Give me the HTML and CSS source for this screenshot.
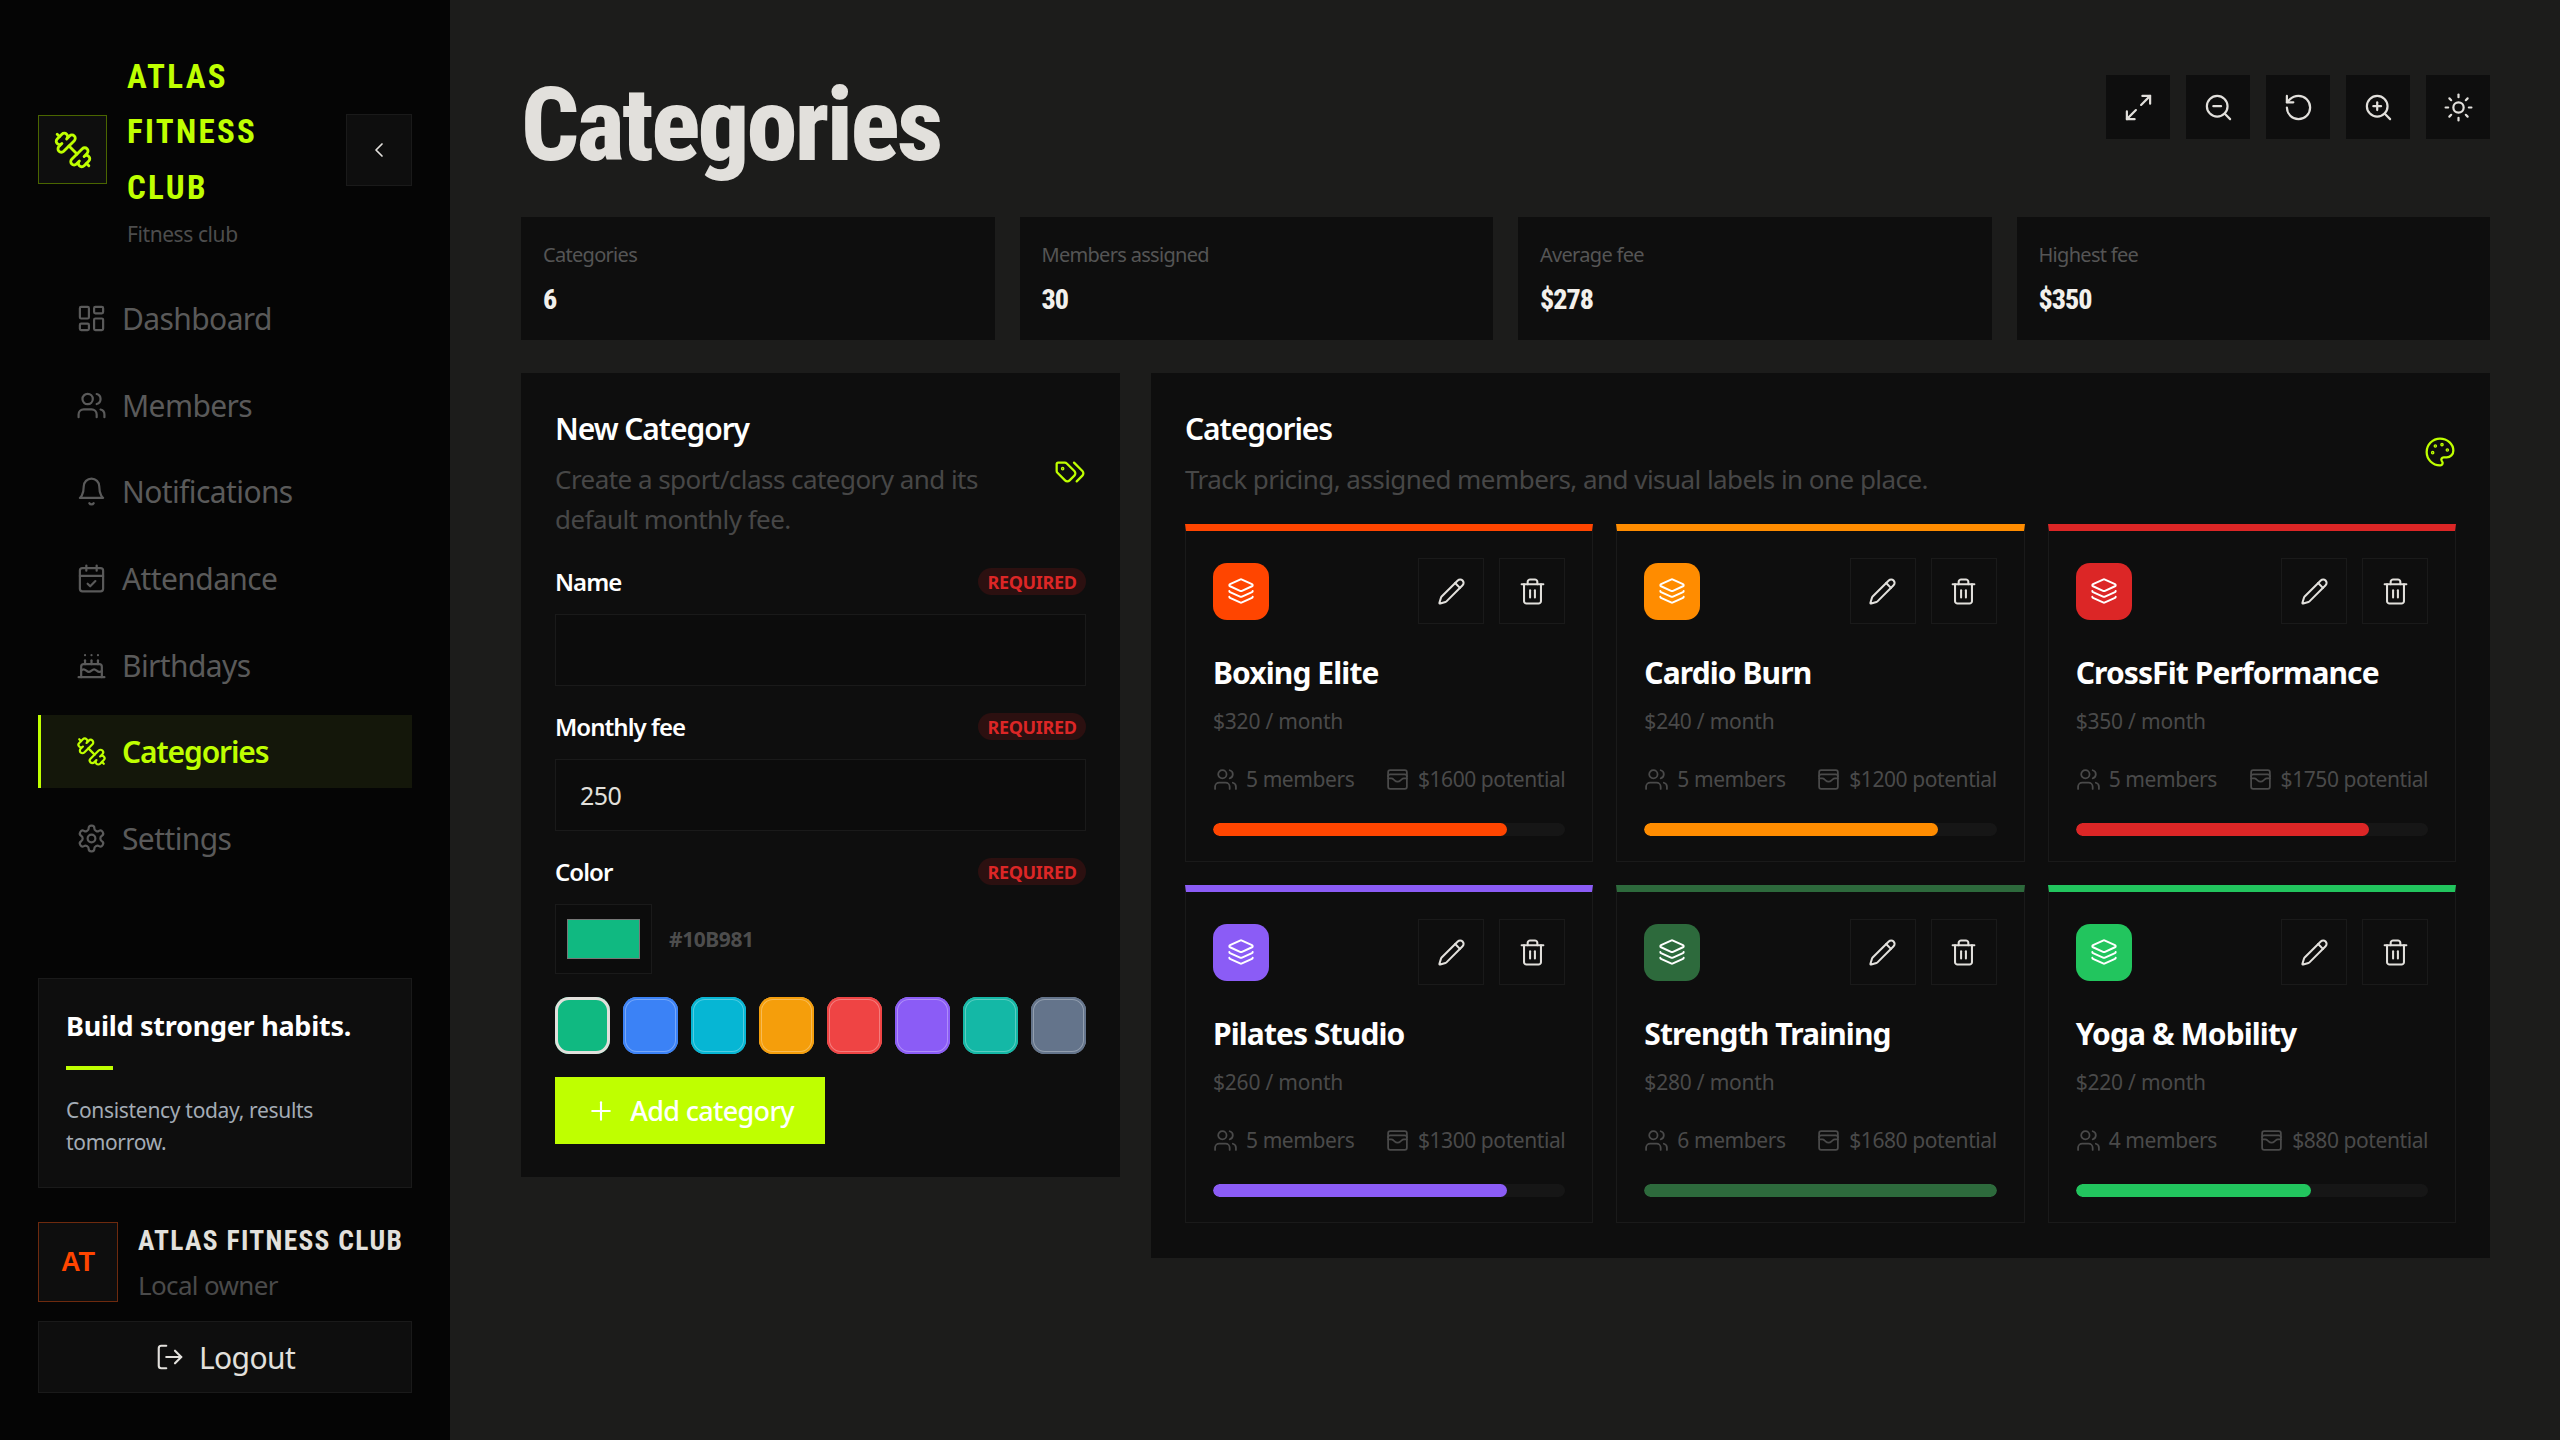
FILE: index.html
```html
<!DOCTYPE html>
<html lang="en">
<head>
<meta charset="UTF-8" />
<title>Categories - Atlas Fitness Club</title>
<link rel="stylesheet" href="styles.css">
</head>
<body>

<svg class="sprite" xmlns="http://www.w3.org/2000/svg">
    <symbol id="i-dumbbell" viewBox="0 0 24 24"><g transform="matrix(-1 0 0 1 24 0)"><path d="M17.596 12.768a2 2 0 1 0 2.829-2.829l-1.768-1.767a2 2 0 0 0 2.828-2.829l-2.828-2.828a2 2 0 0 0-2.829 2.828l-1.767-1.768a2 2 0 1 0-2.829 2.829z"/><path d="m2.5 21.5 1.4-1.4"/><path d="m20.1 3.9 1.4-1.4"/><path d="M5.343 21.485a2 2 0 1 0 2.829-2.828l1.767 1.768a2 2 0 1 0 2.829-2.829l-6.364-6.364a2 2 0 1 0-2.829 2.829l1.768 1.767a2 2 0 0 0-2.828 2.829z"/><path d="m9.6 14.4 4.8-4.8"/></g></symbol>
    <symbol id="i-chevron" viewBox="0 0 24 24"><path d="m15 18-6-6 6-6"/></symbol>
    <symbol id="i-dashboard" viewBox="0 0 24 24"><rect x="3" y="3" width="7" height="9" rx="1"/><rect x="14" y="3" width="7" height="5" rx="1"/><rect x="14" y="12" width="7" height="9" rx="1"/><rect x="3" y="16" width="7" height="5" rx="1"/></symbol>
    <symbol id="i-users" viewBox="0 0 24 24"><path d="M16 21v-2a4 4 0 0 0-4-4H6a4 4 0 0 0-4 4v2"/><circle cx="9" cy="7" r="4"/><path d="M22 21v-2a4 4 0 0 0-3-3.87"/><path d="M16 3.13a4 4 0 0 1 0 7.75"/></symbol>
    <symbol id="i-bell" viewBox="0 0 24 24"><path d="M6 8a6 6 0 0 1 12 0c0 7 3 9 3 9H3s3-2 3-9"/><path d="M10.3 21a1.94 1.94 0 0 0 3.4 0"/></symbol>
    <symbol id="i-calendar" viewBox="0 0 24 24"><path d="M8 2v4"/><path d="M16 2v4"/><rect x="3" y="4" width="18" height="18" rx="2"/><path d="M3 10h18"/><path d="m9 16 2 2 4-4"/></symbol>
    <symbol id="i-cake" viewBox="0 0 24 24"><path d="M20 21v-8a2 2 0 0 0-2-2H6a2 2 0 0 0-2 2v8"/><path d="M4 16s.5-1 2-1 2.5 2 4 2 2.5-2 4-2 2.5 2 4 2 2-1 2-1"/><path d="M2 21h20"/><path d="M7 8v3"/><path d="M12 8v3"/><path d="M17 8v3"/><path d="M7 4h.01"/><path d="M12 4h.01"/><path d="M17 4h.01"/></symbol>
    <symbol id="i-settings" viewBox="0 0 24 24"><path d="M12.22 2h-.44a2 2 0 0 0-2 2v.18a2 2 0 0 1-1 1.73l-.43.25a2 2 0 0 1-2 0l-.15-.08a2 2 0 0 0-2.73.73l-.22.38a2 2 0 0 0 .73 2.73l.15.1a2 2 0 0 1 1 1.72v.51a2 2 0 0 1-1 1.74l-.15.09a2 2 0 0 0-.73 2.73l.22.38a2 2 0 0 0 2.73.73l.15-.08a2 2 0 0 1 2 0l.43.25a2 2 0 0 1 1 1.73V20a2 2 0 0 0 2 2h.44a2 2 0 0 0 2-2v-.18a2 2 0 0 1 1-1.73l.43-.25a2 2 0 0 1 2 0l.15.08a2 2 0 0 0 2.73-.73l.22-.39a2 2 0 0 0-.73-2.73l-.15-.08a2 2 0 0 1-1-1.74v-.5a2 2 0 0 1 1-1.74l.15-.09a2 2 0 0 0 .73-2.73l-.22-.38a2 2 0 0 0-2.73-.73l-.15.08a2 2 0 0 1-2 0l-.43-.25a2 2 0 0 1-1-1.73V4a2 2 0 0 0-2-2z"/><circle cx="12" cy="12" r="3"/></symbol>
    <symbol id="i-logout" viewBox="0 0 24 24"><path d="M9 21H5a2 2 0 0 1-2-2V5a2 2 0 0 1 2-2h4"/><path d="m16 17 5-5-5-5"/><path d="M21 12H9"/></symbol>
    <symbol id="i-expand" viewBox="0 0 24 24"><path d="M15 3h6v6"/><path d="m21 3-7 7"/><path d="m3 21 7-7"/><path d="M9 21H3v-6"/></symbol>
    <symbol id="i-zoom-out" viewBox="0 0 24 24"><circle cx="11" cy="11" r="8"/><path d="m21 21-4.3-4.3"/><path d="M8 11h6"/></symbol>
    <symbol id="i-zoom-in" viewBox="0 0 24 24"><circle cx="11" cy="11" r="8"/><path d="m21 21-4.3-4.3"/><path d="M8 11h6"/><path d="M11 8v6"/></symbol>
    <symbol id="i-rotate" viewBox="0 0 24 24"><path d="M3 12a9 9 0 1 0 9-9 9.75 9.75 0 0 0-6.74 2.74L3 8"/><path d="M3 3v5h5"/></symbol>
    <symbol id="i-sun" viewBox="0 0 24 24"><circle cx="12" cy="12" r="4"/><path d="M12 2v2"/><path d="M12 20v2"/><path d="m4.93 4.93 1.41 1.41"/><path d="m17.66 17.66 1.41 1.41"/><path d="M2 12h2"/><path d="M20 12h2"/><path d="m6.34 17.66-1.41 1.41"/><path d="m19.07 4.93-1.41 1.41"/></symbol>
    <symbol id="i-tags" viewBox="0 0 24 24"><path d="m15 5 6.3 6.3a2.4 2.4 0 0 1 0 3.4L17 19"/><path d="M9.586 5.586A2 2 0 0 0 8.172 5H3a1 1 0 0 0-1 1v5.172a2 2 0 0 0 .586 1.414L8.29 18.29a2.426 2.426 0 0 0 3.42 0l3.58-3.58a2.426 2.426 0 0 0 0-3.42z"/><circle cx="6.5" cy="9.5" r=".5"/></symbol>
    <symbol id="i-palette" viewBox="0 0 24 24"><path d="M12 22a1 1 0 0 1 0-20 10 9 0 0 1 10 9 5 5 0 0 1-5 5h-2.25a1.75 1.75 0 0 0-1.4 2.8l.3.4a1.75 1.75 0 0 1-1.4 2.8z"/><circle cx="13.5" cy="6.5" r=".5"/><circle cx="17.5" cy="10.5" r=".5"/><circle cx="6.5" cy="12.5" r=".5"/><circle cx="8.5" cy="7.5" r=".5"/></symbol>
    <symbol id="i-plus" viewBox="0 0 24 24"><path d="M5 12h14"/><path d="M12 5v14"/></symbol>
    <symbol id="i-layers" viewBox="0 0 24 24"><path d="M12.83 2.18a2 2 0 0 0-1.66 0L2.6 6.08a1 1 0 0 0 0 1.83l8.58 3.91a2 2 0 0 0 1.66 0l8.58-3.9a1 1 0 0 0 0-1.83z"/><path d="M2 12a1 1 0 0 0 .58.91l8.6 3.91a2 2 0 0 0 1.65 0l8.58-3.9A1 1 0 0 0 22 12"/><path d="M2 17a1 1 0 0 0 .58.91l8.6 3.91a2 2 0 0 0 1.65 0l8.58-3.9A1 1 0 0 0 22 17"/></symbol>
    <symbol id="i-pencil" viewBox="0 0 24 24"><path d="M21.174 6.812a1 1 0 0 0-3.986-3.987L3.842 16.174a2 2 0 0 0-.5.83l-1.321 4.352a.5.5 0 0 0 .623.622l4.353-1.32a2 2 0 0 0 .83-.497z"/><path d="m15 5 4 4"/></symbol>
    <symbol id="i-trash" viewBox="0 0 24 24"><path d="M3 6h18"/><path d="M19 6v14c0 1-1 2-2 2H7c-1 0-2-1-2-2V6"/><path d="M8 6V4c0-1 1-2 2-2h4c1 0 2 1 2 2v2"/><path d="M10 11v6"/><path d="M14 11v6"/></symbol>
    <symbol id="i-wallet" viewBox="0 0 24 24"><rect x="3" y="3" width="18" height="18" rx="2"/><path d="M3 9a2 2 0 0 1 2-2h14a2 2 0 0 1 2 2"/><path d="M3 11h3c.8 0 1.6.3 2.1.9l1.1.9c1.6 1.6 4.1 1.6 5.7 0l1.1-.9c.5-.5 1.3-.9 2.1-.9H21"/></symbol>
</svg>

<div class="app">
    <aside class="sidebar">
        <div class="brand">
            <div class="brand-logo"><svg class="icon"><use href="#i-dumbbell"/></svg></div>
            <div class="brand-text">
                <div class="brand-name">ATLAS FITNESS CLUB</div>
                <div class="brand-sub">Fitness club</div>
            </div>
            <button class="collapse-btn"><svg class="icon"><use href="#i-chevron"/></svg></button>
        </div>

        <nav class="nav">
            <a class="nav-item"><svg class="icon"><use href="#i-dashboard"/></svg>Dashboard</a>
            <a class="nav-item"><svg class="icon"><use href="#i-users"/></svg>Members</a>
            <a class="nav-item"><svg class="icon"><use href="#i-bell"/></svg>Notifications</a>
            <a class="nav-item"><svg class="icon"><use href="#i-calendar"/></svg>Attendance</a>
            <a class="nav-item"><svg class="icon"><use href="#i-cake"/></svg>Birthdays</a>
            <a class="nav-item active"><svg class="icon"><use href="#i-dumbbell"/></svg>Categories</a>
            <a class="nav-item"><svg class="icon"><use href="#i-settings"/></svg>Settings</a>
        </nav>

        <div class="promo">
            <div class="promo-title">Build stronger habits.</div>
            <div class="promo-line"></div>
            <p class="promo-text">Consistency today, results tomorrow.</p>
        </div>

        <div class="owner">
            <div class="avatar">AT</div>
            <div>
                <div class="owner-name">ATLAS FITNESS CLUB</div>
                <div class="owner-role">Local owner</div>
            </div>
        </div>

        <button class="logout"><svg class="icon"><use href="#i-logout"/></svg>Logout</button>
    </aside>

    <main class="main">
        <header class="page-head">
            <h1>Categories</h1>
            <div class="tools">
                <button class="tool"><svg class="icon"><use href="#i-expand"/></svg></button>
                <button class="tool"><svg class="icon"><use href="#i-zoom-out"/></svg></button>
                <button class="tool"><svg class="icon"><use href="#i-rotate"/></svg></button>
                <button class="tool"><svg class="icon"><use href="#i-zoom-in"/></svg></button>
                <button class="tool"><svg class="icon"><use href="#i-sun"/></svg></button>
            </div>
        </header>

        <section class="stats">
            <div class="stat"><div class="stat-label">Categories</div><div class="stat-value">6</div></div>
            <div class="stat"><div class="stat-label">Members assigned</div><div class="stat-value">30</div></div>
            <div class="stat"><div class="stat-label">Average fee</div><div class="stat-value">$278</div></div>
            <div class="stat"><div class="stat-label">Highest fee</div><div class="stat-value">$350</div></div>
        </section>

        <section class="columns">
            <form class="panel form-panel">
                <div class="panel-head">
                    <div>
                        <h2>New Category</h2>
                        <p>Create a sport/class category and its default monthly fee.</p>
                    </div>
                    <svg class="icon panel-icon"><use href="#i-tags"/></svg>
                </div>

                <div class="field-label first"><label>Name</label><span class="badge">REQUIRED</span></div>
                <input class="input" type="text" />

                <div class="field-label"><label>Monthly fee</label><span class="badge">REQUIRED</span></div>
                <input class="input" type="text" value="250" />

                <div class="field-label"><label>Color</label><span class="badge">REQUIRED</span></div>
                <div class="color-row">
                    <div class="color-box"><div class="color-fill"></div></div>
                    <span class="color-hex">#10B981</span>
                </div>
                <div class="swatches">
                    <span class="swatch selected s-emerald"></span>
                    <span class="swatch s-blue"></span>
                    <span class="swatch s-cyan"></span>
                    <span class="swatch s-amber"></span>
                    <span class="swatch s-red"></span>
                    <span class="swatch s-violet"></span>
                    <span class="swatch s-teal"></span>
                    <span class="swatch s-slate"></span>
                </div>
                <button class="add-btn" type="button"><svg class="icon"><use href="#i-plus"/></svg>Add category</button>
            </form>

            <div class="panel list-panel">
                <div class="panel-head">
                    <div>
                        <h2>Categories</h2>
                        <p>Track pricing, assigned members, and visual labels in one place.</p>
                    </div>
                    <svg class="icon panel-icon"><use href="#i-palette"/></svg>
                </div>

                <div class="cards">
                    <article class="card c-orange">
                        <div class="card-top">
                            <div class="card-icon"><svg class="icon"><use href="#i-layers"/></svg></div>
                            <div class="card-actions">
                                <button class="act"><svg class="icon"><use href="#i-pencil"/></svg></button>
                                <button class="act"><svg class="icon"><use href="#i-trash"/></svg></button>
                            </div>
                        </div>
                        <h3>Boxing Elite</h3>
                        <div class="price">$320 / month</div>
                        <div class="meta">
                            <span><svg class="icon"><use href="#i-users"/></svg>5 members</span>
                            <span><svg class="icon"><use href="#i-wallet"/></svg>$1600 potential</span>
                        </div>
                        <div class="bar"><div class="bar-fill" style="width: 83.33%"></div></div>
                    </article>

                    <article class="card c-amber">
                        <div class="card-top">
                            <div class="card-icon"><svg class="icon"><use href="#i-layers"/></svg></div>
                            <div class="card-actions">
                                <button class="act"><svg class="icon"><use href="#i-pencil"/></svg></button>
                                <button class="act"><svg class="icon"><use href="#i-trash"/></svg></button>
                            </div>
                        </div>
                        <h3>Cardio Burn</h3>
                        <div class="price">$240 / month</div>
                        <div class="meta">
                            <span><svg class="icon"><use href="#i-users"/></svg>5 members</span>
                            <span><svg class="icon"><use href="#i-wallet"/></svg>$1200 potential</span>
                        </div>
                        <div class="bar"><div class="bar-fill" style="width: 83.33%"></div></div>
                    </article>

                    <article class="card c-red">
                        <div class="card-top">
                            <div class="card-icon"><svg class="icon"><use href="#i-layers"/></svg></div>
                            <div class="card-actions">
                                <button class="act"><svg class="icon"><use href="#i-pencil"/></svg></button>
                                <button class="act"><svg class="icon"><use href="#i-trash"/></svg></button>
                            </div>
                        </div>
                        <h3>CrossFit Performance</h3>
                        <div class="price">$350 / month</div>
                        <div class="meta">
                            <span><svg class="icon"><use href="#i-users"/></svg>5 members</span>
                            <span><svg class="icon"><use href="#i-wallet"/></svg>$1750 potential</span>
                        </div>
                        <div class="bar"><div class="bar-fill" style="width: 83.33%"></div></div>
                    </article>

                    <article class="card c-violet">
                        <div class="card-top">
                            <div class="card-icon"><svg class="icon"><use href="#i-layers"/></svg></div>
                            <div class="card-actions">
                                <button class="act"><svg class="icon"><use href="#i-pencil"/></svg></button>
                                <button class="act"><svg class="icon"><use href="#i-trash"/></svg></button>
                            </div>
                        </div>
                        <h3>Pilates Studio</h3>
                        <div class="price">$260 / month</div>
                        <div class="meta">
                            <span><svg class="icon"><use href="#i-users"/></svg>5 members</span>
                            <span><svg class="icon"><use href="#i-wallet"/></svg>$1300 potential</span>
                        </div>
                        <div class="bar"><div class="bar-fill" style="width: 83.33%"></div></div>
                    </article>

                    <article class="card c-forest">
                        <div class="card-top">
                            <div class="card-icon"><svg class="icon"><use href="#i-layers"/></svg></div>
                            <div class="card-actions">
                                <button class="act"><svg class="icon"><use href="#i-pencil"/></svg></button>
                                <button class="act"><svg class="icon"><use href="#i-trash"/></svg></button>
                            </div>
                        </div>
                        <h3>Strength Training</h3>
                        <div class="price">$280 / month</div>
                        <div class="meta">
                            <span><svg class="icon"><use href="#i-users"/></svg>6 members</span>
                            <span><svg class="icon"><use href="#i-wallet"/></svg>$1680 potential</span>
                        </div>
                        <div class="bar"><div class="bar-fill" style="width: 100%"></div></div>
                    </article>

                    <article class="card c-green">
                        <div class="card-top">
                            <div class="card-icon"><svg class="icon"><use href="#i-layers"/></svg></div>
                            <div class="card-actions">
                                <button class="act"><svg class="icon"><use href="#i-pencil"/></svg></button>
                                <button class="act"><svg class="icon"><use href="#i-trash"/></svg></button>
                            </div>
                        </div>
                        <h3>Yoga &amp; Mobility</h3>
                        <div class="price">$220 / month</div>
                        <div class="meta">
                            <span><svg class="icon"><use href="#i-users"/></svg>4 members</span>
                            <span><svg class="icon"><use href="#i-wallet"/></svg>$880 potential</span>
                        </div>
                        <div class="bar"><div class="bar-fill" style="width: 66.67%"></div></div>
                    </article>
                </div>
            </div>
        </section>
    </main>
</div>

</body>
</html>
```

FILE: styles.css
```css
* {
    box-sizing: border-box;
    letter-spacing: -0.02em;
}

body {
    margin: 0;
    background: #1c1c1b;
    color: #e2e0dc;
    font-family: "Noto Sans", "Open Sans", sans-serif;
}

button {
    font-family: inherit;
    cursor: pointer;
}

.sprite {
    display: none;
}

.icon {
    width: 24px;
    height: 24px;
    flex: none;
    fill: none;
    stroke: currentColor;
    stroke-width: 1.7;
    stroke-linecap: round;
    stroke-linejoin: round;
}

.app {
    display: flex;
    width: 2560px;
    height: 1440px;
    overflow: hidden;
}

/* sidebar */
.sidebar {
    width: 450px;
    flex: none;
    background: #050505;
    padding: 47px 38px;
    display: flex;
    flex-direction: column;
}

.brand {
    display: flex;
    align-items: center;
    height: 205px;
}

.brand-logo {
    width: 69px;
    height: 69px;
    flex: none;
    background: #0e0e0e;
    border: 1px solid #4a6600;
    color: #bfff00;
    display: flex;
    align-items: center;
    justify-content: center;
}

.brand-logo .icon {
    width: 40px;
    height: 40px;
}

.brand-text {
    width: 218px;
    padding: 3px 0 0 20px;
}

.brand-name {
    font-family: "Roboto", "Liberation Sans", sans-serif;
    font-stretch: 75%;
    font-weight: 700;
    font-size: 33px;
    line-height: 55.5px;
    letter-spacing: 2.3px;
    color: #bfff00;
    width: 120px;
}

.brand-sub {
    font-size: 21px;
    line-height: 38px;
    color: #4d4d4d;
}

.collapse-btn {
    width: 66px;
    height: 72px;
    margin-left: auto;
    background: #0e0e0e;
    border: 1px solid #1a1a1a;
    color: #e2e0dc;
    display: flex;
    align-items: center;
    justify-content: center;
    padding: 0;
}

.nav {
    margin-top: 30px;
    display: flex;
    flex-direction: column;
    gap: 13.7px;
}

.nav-item {
    height: 73px;
    display: flex;
    align-items: center;
    gap: 15px;
    padding-left: 35px;
    border-left: 3px solid transparent;
    font-size: 30px;
    color: #5a5a5a;
}

.nav-item .icon {
    width: 31px;
    height: 31px;
}

.nav-item.active {
    background: #14170a;
    border-left-color: #bfff00;
    color: #bfff00;
    font-weight: 600;
    letter-spacing: -0.037em;
}

.promo {
    margin-top: auto;
    height: 210px;
    background: #0e0e0e;
    border: 1px solid #1a1a1a;
    padding: 28px 27px;
}

.promo-title {
    font-size: 27px;
    font-weight: 700;
    line-height: 38px;
    letter-spacing: -0.01em;
    color: #fff;
}

.promo-line {
    width: 47px;
    height: 4px;
    background: #bfff00;
    margin-top: 21px;
}

.promo-text {
    margin: 24px 0 0;
    font-size: 21px;
    line-height: 32px;
    letter-spacing: -0.015em;
    color: #a3abb5;
}

.owner {
    display: flex;
    align-items: flex-start;
    gap: 20px;
    height: 80px;
    margin-top: 34px;
}

.avatar {
    width: 80px;
    height: 80px;
    flex: none;
    background: #0e0e0e;
    border: 1px solid #6e2a0e;
    color: #ff4500;
    font-family: "Liberation Sans", sans-serif;
    font-weight: 700;
    font-size: 27px;
    letter-spacing: 0;
    display: flex;
    align-items: center;
    justify-content: center;
}

.owner-name {
    font-family: "Roboto", "Liberation Sans", sans-serif;
    font-stretch: 75%;
    font-weight: 700;
    font-size: 27.5px;
    letter-spacing: 1.3px;
    line-height: 38px;
    white-space: nowrap;
}

.owner-role {
    margin-top: 4px;
    font-size: 26px;
    line-height: 42px;
    letter-spacing: -0.025em;
    color: #4a4a4a;
}

.logout {
    height: 72px;
    margin-top: 19px;
    background: #0e0e0e;
    border: 1px solid #1a1a1a;
    color: #e2e0dc;
    font-size: 30px;
    display: flex;
    align-items: center;
    justify-content: center;
    gap: 14px;
    padding: 0;
}

.logout .icon {
    width: 30px;
    height: 30px;
}

/* main */
.main {
    flex: 1;
    padding: 75px 70px 0 71px;
    min-width: 0;
}

.page-head {
    display: flex;
    justify-content: space-between;
    align-items: flex-start;
}

h1 {
    margin: 0 0 42px;
    font-family: "Roboto", "Liberation Sans", sans-serif;
    font-stretch: 75%;
    font-weight: 800;
    font-size: 102px;
    letter-spacing: -2.5px;
    line-height: 100px;
}

.tools {
    display: flex;
    gap: 16px;
}

.tool {
    width: 64px;
    height: 64px;
    background: #0e0e0e;
    border: none;
    color: #e2e0dc;
    display: flex;
    align-items: center;
    justify-content: center;
    padding: 0;
}

.tool .icon {
    width: 31px;
    height: 31px;
}

.stats {
    display: grid;
    grid-template-columns: repeat(4, 1fr);
    gap: 25px;
}

.stat {
    height: 123px;
    background: #0e0e0e;
    padding: 23px 22px;
}

.stat-label {
    font-size: 20px;
    line-height: 30px;
    letter-spacing: -0.035em;
    color: #555;
}

.stat-value {
    margin-top: 12px;
    font-family: "Roboto", "Liberation Sans", sans-serif;
    font-stretch: 75%;
    font-weight: 800;
    font-size: 28px;
    letter-spacing: -1px;
    line-height: 36px;
    color: #f2f0ec;
}

.columns {
    display: grid;
    grid-template-columns: 599px 1fr;
    gap: 31px;
    align-items: start;
    margin-top: 33px;
}

.panel {
    background: #0e0e0e;
    padding: 36px 34px 35px;
}

.form-panel {
    padding-bottom: 33px;
}

.panel-head {
    display: flex;
    justify-content: space-between;
    align-items: center;
    gap: 40px;
}

h2 {
    margin: 0;
    font-size: 30px;
    font-weight: 600;
    line-height: 40px;
    letter-spacing: -0.035em;
    color: #fff;
}

.panel-head p {
    margin: 10px 0 0;
    font-size: 26px;
    line-height: 40px;
    letter-spacing: -0.021em;
    color: #474747;
}

.panel-icon {
    width: 32px;
    height: 32px;
    margin-bottom: 5px;
    color: #bfff00;
}

/* form */
.field-label {
    display: flex;
    justify-content: space-between;
    align-items: center;
    height: 27px;
    margin: 27px 0 19px;
}

.field-label.first {
    margin-top: 29px;
}

.field-label label {
    font-size: 24px;
    font-weight: 600;
    letter-spacing: -0.04em;
    color: #fff;
}

.badge {
    width: 108px;
    height: 27px;
    border-radius: 14px;
    background: #2c1010;
    color: #dc2626;
    font-size: 18px;
    font-weight: 700;
    display: flex;
    align-items: center;
    justify-content: center;
}

.input {
    display: block;
    width: 100%;
    height: 72px;
    background: #0c0c0c;
    border: 1px solid #1a1a1a;
    padding: 0 24px;
    font-family: inherit;
    font-size: 25px;
    color: #e2e0dc;
    outline: none;
}

.color-row {
    display: flex;
    align-items: center;
    gap: 17px;
}

.color-box {
    width: 97px;
    height: 70px;
    background: #0c0c0c;
    border: 1px solid #1a1a1a;
    padding: 14px 11px;
}

.color-fill {
    width: 100%;
    height: 100%;
    background: #10b981;
    border: 1px solid #777;
}

.color-hex {
    font-size: 21px;
    font-weight: 700;
    color: #4d4d4d;
}

.swatches {
    display: flex;
    justify-content: space-between;
    margin-top: 23px;
}

.swatch {
    width: 55px;
    height: 57px;
    border-radius: 14px;
    background: var(--c);
    box-shadow: inset 0 0 0 2px var(--c), inset 0 0 0 3px rgba(255, 255, 255, 0.3);
}

.swatch.selected {
    box-shadow: inset 0 0 0 3px #e2e0dc;
}

.s-emerald { --c: #10b981; }
.s-blue { --c: #3b82f6; }
.s-cyan { --c: #06b6d4; }
.s-amber { --c: #f59e0b; }
.s-red { --c: #ef4444; }
.s-violet { --c: #8b5cf6; }
.s-teal { --c: #14b8a6; }
.s-slate { --c: #64748b; }

.add-btn {
    width: 270px;
    height: 67px;
    margin-top: 23px;
    background: #bfff00;
    border: none;
    color: #fff;
    font-size: 27px;
    font-weight: 500;
    letter-spacing: -0.025em;
    display: flex;
    align-items: center;
    justify-content: center;
    gap: 14px;
    padding: 0;
}

.add-btn .icon {
    width: 30px;
    height: 30px;
}

/* category cards */
.cards {
    display: grid;
    grid-template-columns: repeat(3, 1fr);
    gap: 23px;
    margin-top: 25px;
}

.card {
    height: 338px;
    border: 1px solid #1a1a1a;
    border-top: 7px solid var(--c);
    padding: 27px 27px 0;
}

.c-orange { --c: #ff4500; }
.c-amber { --c: #ff8c00; }
.c-red { --c: #dc2626; }
.c-violet { --c: #8b5cf6; }
.c-forest { --c: #2d6a3c; }
.c-green { --c: #22c55e; }

.card-top {
    display: flex;
    justify-content: space-between;
    align-items: center;
}

.card-icon {
    width: 56px;
    height: 57px;
    border-radius: 14px;
    background: var(--c);
    color: #fff;
    display: flex;
    align-items: center;
    justify-content: center;
}

.card-icon .icon {
    width: 28px;
    height: 28px;
}

.card-actions {
    display: flex;
    gap: 15px;
}

.act {
    width: 66px;
    height: 66px;
    background: #0e0e0e;
    border: 1px solid #1a1a1a;
    color: #e2e0dc;
    display: flex;
    align-items: center;
    justify-content: center;
    padding: 0;
}

.act .icon {
    width: 29px;
    height: 29px;
}

h3 {
    margin: 27px 0 0;
    font-size: 30px;
    font-weight: 700;
    line-height: 44px;
    letter-spacing: -0.03em;
    color: #fff;
}

.price {
    margin-top: 10px;
    font-size: 21px;
    line-height: 32px;
    letter-spacing: -0.01em;
    color: #4a4a4a;
}

.meta {
    display: flex;
    justify-content: space-between;
    margin-top: 26px;
    font-size: 21px;
    line-height: 32px;
    color: #4a4a4a;
    white-space: nowrap;
}

.meta span {
    display: flex;
    align-items: center;
    gap: 8px;
}

.meta .icon {
    width: 25px;
    height: 25px;
}

.bar {
    height: 13px;
    margin-top: 28px;
    border-radius: 7px;
    background: #161616;
    overflow: hidden;
}

.bar-fill {
    height: 100%;
    border-radius: 7px;
    background: var(--c);
}
```
